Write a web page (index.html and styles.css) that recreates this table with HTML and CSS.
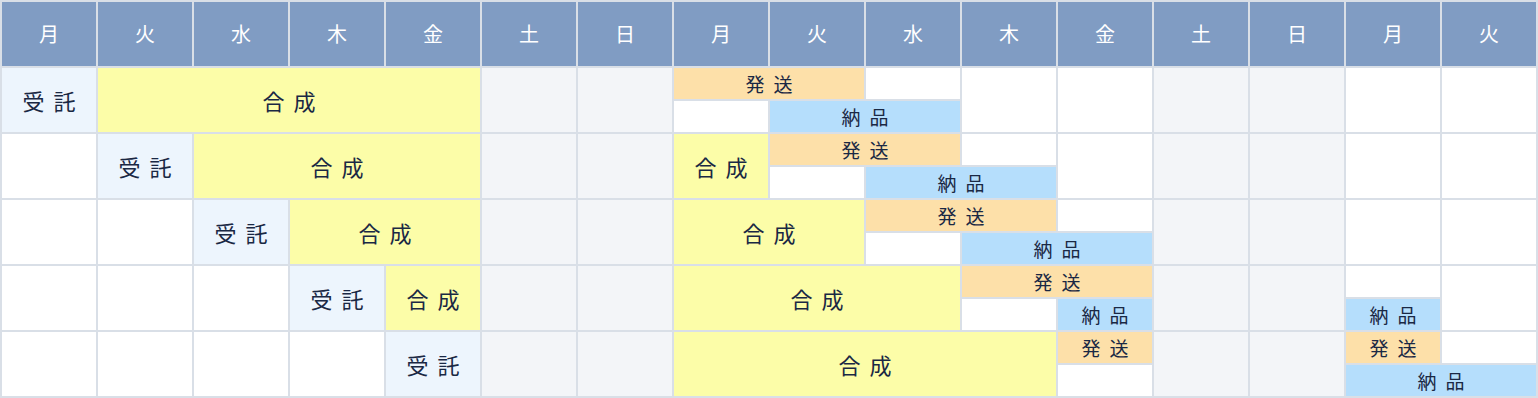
FILE: index.html
```html
<!DOCTYPE html>
<html lang="ja">
<head>
<meta charset="utf-8">
<title>スケジュール</title>
<link rel="stylesheet" href="styles.css">
</head>
<body>
<div class="schedule">
  <div class="hd">月</div><div class="hd">火</div><div class="hd">水</div><div class="hd">木</div><div class="hd">金</div><div class="hd">土</div><div class="hd">日</div>
  <div class="hd">月</div><div class="hd">火</div><div class="hd">水</div><div class="hd">木</div><div class="hd">金</div><div class="hd">土</div><div class="hd">日</div>
  <div class="hd">月</div><div class="hd">火</div>

  <!-- row 1 -->
  <div class="c juta r2"><span>受託</span></div>
  <div class="c gosei r2 s4"><span>合成</span></div>
  <div class="c we r2"></div><div class="c we r2"></div>
  <div class="c hasso sm s2"><span>発送</span></div>
  <div class="c"></div>
  <div class="c r2"></div><div class="c r2"></div>
  <div class="c we r2"></div><div class="c we r2"></div>
  <div class="c r2"></div><div class="c r2"></div>
  <div class="c"></div>
  <div class="c nohin sm s2"><span>納品</span></div>

  <!-- row 2 -->
  <div class="c r2"></div>
  <div class="c juta r2"><span>受託</span></div>
  <div class="c gosei r2 s3"><span>合成</span></div>
  <div class="c we r2"></div><div class="c we r2"></div>
  <div class="c gosei r2"><span>合成</span></div>
  <div class="c hasso sm s2"><span>発送</span></div>
  <div class="c"></div>
  <div class="c r2"></div>
  <div class="c we r2"></div><div class="c we r2"></div>
  <div class="c r2"></div><div class="c r2"></div>
  <div class="c"></div>
  <div class="c nohin sm s2"><span>納品</span></div>

  <!-- row 3 -->
  <div class="c r2"></div><div class="c r2"></div>
  <div class="c juta r2"><span>受託</span></div>
  <div class="c gosei r2 s2"><span>合成</span></div>
  <div class="c we r2"></div><div class="c we r2"></div>
  <div class="c gosei r2 s2"><span>合成</span></div>
  <div class="c hasso sm s2"><span>発送</span></div>
  <div class="c"></div>
  <div class="c we r2"></div><div class="c we r2"></div>
  <div class="c r2"></div><div class="c r2"></div>
  <div class="c"></div>
  <div class="c nohin sm s2"><span>納品</span></div>

  <!-- row 4 -->
  <div class="c r2"></div><div class="c r2"></div><div class="c r2"></div>
  <div class="c juta r2"><span>受託</span></div>
  <div class="c gosei r2"><span>合成</span></div>
  <div class="c we r2"></div><div class="c we r2"></div>
  <div class="c gosei r2 s3"><span>合成</span></div>
  <div class="c hasso sm s2"><span>発送</span></div>
  <div class="c we r2"></div><div class="c we r2"></div>
  <div class="c"></div>
  <div class="c r2"></div>
  <div class="c"></div>
  <div class="c nohin sm"><span>納品</span></div>
  <div class="c nohin sm"><span>納品</span></div>

  <!-- row 5 -->
  <div class="c r2"></div><div class="c r2"></div><div class="c r2"></div><div class="c r2"></div>
  <div class="c juta r2"><span>受託</span></div>
  <div class="c we r2"></div><div class="c we r2"></div>
  <div class="c gosei r2 s4"><span>合成</span></div>
  <div class="c hasso sm"><span>発送</span></div>
  <div class="c we r2"></div><div class="c we r2"></div>
  <div class="c hasso sm"><span>発送</span></div>
  <div class="c"></div>
  <div class="c"></div>
  <div class="c nohin sm s2"><span>納品</span></div>
</div>
</body>
</html>
```

FILE: styles.css
```css
* {
  box-sizing: border-box;
}

html, body {
  margin: 0;
  padding: 0;
  background: #ffffff;
}

body {
  font-family: "Noto Sans CJK JP", "Noto Sans", sans-serif;
  color: #1a2844;
}

.schedule {
  display: grid;
  grid-template-columns: repeat(16, 94px);
  grid-template-rows: 64px repeat(10, 31px);
  gap: 2px;
  padding: 2px;
  width: 1538px;
  height: 398px;
  background: #d9dfe7;
}

.hd {
  background: #809cc3;
  color: #ffffff;
  font-size: 20px;
  display: flex;
  align-items: center;
  justify-content: center;
  line-height: 1;
}

.c {
  background: #ffffff;
  display: flex;
  align-items: center;
  justify-content: center;
  font-size: 22px;
  line-height: 1;
}

.c span {
  letter-spacing: 9px;
  padding-left: 9px;
}

.c.sm {
  font-size: 19px;
}

.c.sm span {
  letter-spacing: 9px;
  padding-left: 9px;
}

.r2 { grid-row: span 2; }
.s2 { grid-column: span 2; }
.s3 { grid-column: span 3; }
.s4 { grid-column: span 4; }

.juta { background: #edf5fd; }
.gosei { background: #fcfda8; }
.hasso { background: #fde0a9; }
.nohin { background: #b5defc; }
.we { background: #f3f5f8; }
```
